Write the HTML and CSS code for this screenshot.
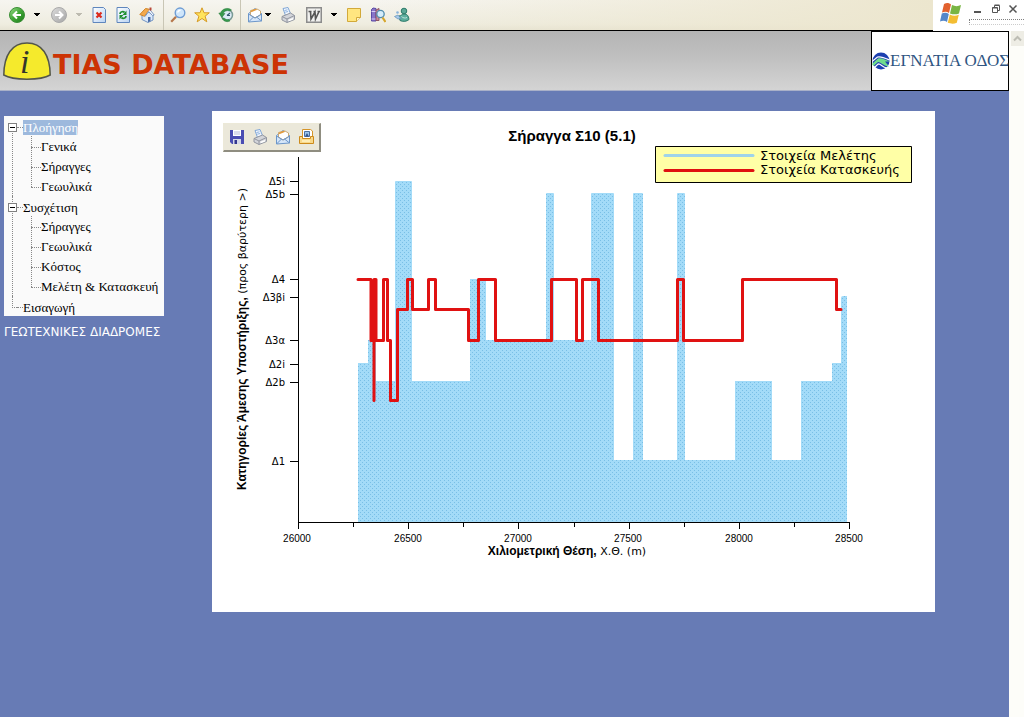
FILE: index.html
```html
<!DOCTYPE html>
<html lang="el">
<head>
<meta charset="utf-8">
<title>TIAS DATABASE</title>
<meta name="viewport" content="width=device-width, initial-scale=1">
<link rel="stylesheet" href="styles.css">
</head>
<body>
<svg class="defs" aria-hidden="true">
  <defs>
    <linearGradient id="green" x1="0" y1="0" x2="1" y2="1"><stop offset="0" stop-color="#9bdc8a"/><stop offset=".5" stop-color="#3fa535"/><stop offset="1" stop-color="#1c7a1a"/></linearGradient>
    <linearGradient id="grey" x1="0" y1="0" x2="1" y2="1"><stop offset="0" stop-color="#dcdcdc"/><stop offset="1" stop-color="#a5a5a5"/></linearGradient>
    <linearGradient id="sheet" x1="0" y1="0" x2="1" y2="1"><stop offset="0" stop-color="#ffffff"/><stop offset="1" stop-color="#b9d3f3"/></linearGradient>
    <symbol id="i-mail" viewBox="0 0 16 16">
      <path d="M1.500 6.500 8 1.500l6.500 5v7.500l-13 1z" fill="#d5e6fa" stroke="#6c96c9"/>
      <path d="M3.500 3.500 10 2l3.500 2v4L8 11 3.500 8z" fill="#fff" stroke="#c9a877"/>
      <path d="M1.500 7 8 11l6.500-4M1.500 15 6.500 10M14.500 14 9.500 10" fill="none" stroke="#6c96c9"/>
      <path d="M4 4.500 9.500 2.200" stroke="#e29a3c" stroke-width="1.500"/>
    </symbol>
    <symbol id="i-print" viewBox="0 0 16 16">
      <path d="M3 1.500 8 .5l2.500 6-5 2z" fill="#f4f9ff" stroke="#7fa6d6"/>
      <path d="M4.500 3.500l3-.7M5.200 5.200l3-.7" stroke="#8bb0e0"/>
      <path d="M2 9.500 10.500 6l4 2.500v4L7 15.500 2 13z" fill="#d3d5da" stroke="#9296a0"/>
      <path d="M2 9.500 7 12l7.500-3.500M7 12v3.500" fill="none" stroke="#9296a0"/>
      <path d="M8.500 13.500 13 11.800" stroke="#fff" stroke-width="1.500"/>
    </symbol>
    <symbol id="i-caret" viewBox="0 0 8 16"><path d="M1 6h6v1H6v1H5v1H3V8H2V7H1z" fill="currentColor"/></symbol>
  </defs>
</svg>

<div class="chrome">
  <div class="toolbar" role="toolbar" aria-label="Browser">
    <div class="group">
      <button class="tool" aria-label="Back"><svg viewBox="0 0 16 16"><circle cx="8" cy="8" r="7.500" fill="url(#green)" stroke="#3b8f36"/><path d="M12 8H5M8 4.500 4.500 8 8 11.500" fill="none" stroke="#fff" stroke-width="2"/></svg></button>
      <button class="tool caret" aria-label="Back list"><svg viewBox="0 0 8 16"><use href="#i-caret"/></svg></button>
    </div>
    <div class="group split">
      <button class="tool" aria-label="Forward"><svg viewBox="0 0 16 16"><circle cx="8" cy="8" r="7.500" fill="url(#grey)" stroke="#a9a9a9"/><path d="M4 8h7M8 4.500 11.500 8 8 11.500" fill="none" stroke="#fff" stroke-width="2"/></svg></button>
      <button class="tool caret dim" aria-label="Forward list"><svg viewBox="0 0 8 16"><use href="#i-caret"/></svg></button>
    </div>
    <div class="group inset">
      <button class="tool" aria-label="Stop"><svg viewBox="0 0 16 16"><path d="M2 .5h10.500l2 2v13H2z" fill="url(#sheet)" stroke="#5f86bd"/><path d="M5.500 5.500l5 5M10.500 5.500l-5 5" stroke="#dc2a1c" stroke-width="2.200"/></svg></button>
      <button class="tool" aria-label="Refresh"><svg viewBox="0 0 16 16"><path d="M2 .5h10.500l2 2v13H2z" fill="url(#sheet)" stroke="#5f86bd"/><path d="M5 7c0-2.500 3.500-3 4.500-1.500M11 9c0 2.500-3.500 3-4.500 1.500" fill="none" stroke="#1f9030" stroke-width="1.800"/><path d="M11.500 3.500V8H7.500zM4.500 12.500V8h4z" fill="#1f9030"/></svg></button>
      <button class="tool" aria-label="Home"><svg viewBox="0 0 16 16"><path d="M3 7.500 6 4l8 3v6l-5 2.500-6-3z" fill="#dce9fa" stroke="#7394c2"/><path d="M.8 7.500 6.500 1.500l4 .8-5 7z" fill="#f2a94e" stroke="#d18428"/><path d="M10.500 2.300 15.200 8l-1.500.7-4-4.200L6 9.500" fill="#fff" stroke="#7394c2"/><path d="M9 10h2.500v4.200L9 15.300z" fill="#4a6ea8"/><path d="M10.500.5h2v3h-2z" fill="#b8493a"/></svg></button>
    </div>
    <div class="group ruled">
      <button class="tool" aria-label="Search"><svg viewBox="0 0 16 16"><path d="M1.200 14.800 6 9.700" stroke="#b5764a" stroke-width="2.200"/><circle cx="10" cy="5.800" r="4.800" fill="#cfe6fb" stroke="#6e9cd4" stroke-width="1.400"/><path d="M7.500 5.500c.5-1.500 1.500-2.300 3-2.300" fill="none" stroke="#fff" stroke-width="1.400"/></svg></button>
      <button class="tool" aria-label="Favorites"><svg viewBox="0 0 16 16"><path d="M8 .8l2 5h5.300l-4.200 3.400 1.700 5.600L8 11.500l-4.800 3.300 1.700-5.600L.7 5.800H6z" fill="#ffe45c" stroke="#d69a24"/></svg></button>
      <button class="tool" aria-label="History"><svg viewBox="0 0 16 16"><circle cx="9" cy="8" r="5.500" fill="#dcebf6" stroke="#7a9a96" stroke-width="1.500"/><path d="M13.500 3A7 7 0 0 0 2.500 6L.8 6 3.800 10.500 7 6.500H5A5 5 0 0 1 11.500 4zM4 11.500a6.500 6.500 0 0 0 8 2.500l-1-1.500a5 5 0 0 1-5-1.500z" fill="#37994c" stroke="#287a3c" stroke-width=".5"/><path d="M9 8.500l3-2.500M9 8.500h3" stroke="#34586e" stroke-width="1.200"/></svg></button>
    </div>
    <div class="group ruled">
      <span class="menu">
        <button class="tool" aria-label="Mail"><svg viewBox="0 0 16 16"><use href="#i-mail"/></svg></button>
        <button class="tool caret" aria-label="Mail options"><svg viewBox="0 0 8 16"><use href="#i-caret"/></svg></button>
      </span>
      <button class="tool" aria-label="Print"><svg viewBox="0 0 16 16"><use href="#i-print"/></svg></button>
    </div>
    <div class="group split">
      <button class="tool" aria-label="Edit with Word"><svg viewBox="0 0 16 16"><path d="M.75.75h14.500v14.500H.75z" fill="#f0f0ee" stroke="#8c8c8c" stroke-width="1.500"/><path d="M2.500 4.500h3M7.500 4.500h2M11.500 4.500h2.500M4.500 4.500 5 12l4-7 .5 7 3.500-7.500" fill="none" stroke="#555" stroke-width="1.600"/></svg></button>
      <button class="tool caret" aria-label="Edit options"><svg viewBox="0 0 8 16"><use href="#i-caret"/></svg></button>
    </div>
    <div class="group inset">
      <button class="tool" aria-label="Notes"><svg viewBox="0 0 16 16"><path d="M1.500 1.500h13v9l-4 4h-9z" fill="#ffe680" stroke="#d2a93a"/><path d="M10.500 14.500v-4h4" fill="#fff6c4" stroke="#d2a93a"/></svg></button>
      <button class="tool" aria-label="Research"><svg viewBox="0 0 16 16"><path d="M1.500 2.500 3 1l3 .5v12.500H1.500z" fill="#8875c9" stroke="#5b4aa5"/><path d="M6 3l3-1.500v12H6z" fill="#c88a9a" stroke="#8c5566"/><path d="M1.500 4.500h4M1.500 12h4" stroke="#d9cff5"/><circle cx="10.500" cy="7" r="3.700" fill="#d4ecfa" stroke="#528dac" stroke-width="1.300"/><path d="M12.500 10.500l3 4.500" stroke="#d6a62b" stroke-width="2.200"/></svg></button>
      <button class="tool" aria-label="Messenger"><svg viewBox="0 0 16 16"><circle cx="10" cy="4" r="2.800" fill="#5aa896" stroke="#2d7a69"/><path d="M5 9c2 0 3-2 5-2 3 0 4.500 1.500 5 5.500-2 2-6 2.500-9 1z" fill="#5cae9d" stroke="#2d7a69"/><path d="M7.500 9.500c1.500 1.500 3.500 2 5.500 1" fill="none" stroke="#bfe6dc"/><circle cx="3.500" cy="5.500" r="1.300" fill="#89b3da"/><path d="M.5 9.500 4 8l3 3.500-3 .5z" fill="#a6c9e9" stroke="#5e8eb8" stroke-width=".7"/></svg></button>
    </div>
  </div>
  <div class="window">
    <svg class="flag" viewBox="0 0 24 22" role="img" aria-label="Windows"><path d="M5 2c3-1.500 5-1 7 .5L10 11C8 9.500 5.500 9.500 3 10.500z" fill="#e2612e"/><path d="M13 3c3 1.500 6 1.500 9 0l-2 8.500c-3 1.300-6 1-9 0z" fill="#79b543"/><path d="M2.800 11.500c2.500-1 5-1 7 .5L8 20c-2-1.500-4.500-1.500-7-.5z" fill="#5487c9"/><path d="M10.800 12.500c3 1.500 6 1.500 9 .3l-2 8c-3 1.200-6 1-9 0z" fill="#f3bd32"/></svg>
    <div class="window-side">
      <div class="window-buttons">
        <button class="win" aria-label="Minimize"><svg viewBox="0 0 10 10"><path d="M1 8h7" stroke="#555" stroke-width="2"/></svg></button>
        <button class="win" aria-label="Restore"><svg viewBox="0 0 10 10"><path d="M3.500 3V1.500h5v5H7M1.500 3.500h5v5h-5zM3.500 1h5M1.500 4h5" fill="none" stroke="#555"/></svg></button>
        <button class="win" aria-label="Close"><svg viewBox="0 0 10 10"><path d="M1.500 1.500l7 7M8.500 1.500l-7 7" stroke="#555" stroke-width="1.500"/></svg></button>
      </div>
      <div class="strip"></div>
    </div>
  </div>
</div>

<div class="viewport">
  <div class="page">
    <header class="banner">
      <svg class="info" viewBox="0 0 48 38" aria-hidden="true"><path d="M.8 33C1 13 9 1 24 1s23 12 23.200 32C38 38.500 10 38.500.8 33z" fill="#f5ea2c" stroke="#53564a" stroke-width="1.500"/><text x="17" y="31" class="info-letter">i</text></svg>
      <h1>TIAS DATABASE</h1>
      <div class="brand">
        <svg class="globe" viewBox="0 0 18 18" aria-hidden="true"><circle cx="9" cy="9" r="8.500" fill="#1c3fb0"/><path d="M0 12 6 6.500C9 5.500 12 7 18 9.500L13 9.500 17 14.500C12 14.500 9 10 6 10L1.500 14z" fill="#6fdc8c"/><path d="M0 9.500 5.500 5C9 4 12 5.500 17.500 8M2.500 15.500 6 12c3-.5 4 3.500 9 4" fill="none" stroke="#fff" stroke-width="1.200"/></svg>
        <span>ΕΓΝΑΤΙΑ ΟΔΟΣ</span>
      </div>
    </header>

    <div class="content">
      <nav class="side">
        <ul class="tree">
          <li class="branch"><div class="row"><button class="toggle" aria-label="Σύμπτυξη"></button><a class="selected" href="#">Πλοήγηση</a></div>
            <ul>
              <li><a href="#">Γενικά</a></li>
              <li><a href="#">Σήραγγες</a></li>
              <li><a href="#">Γεωυλικά</a></li>
            </ul>
          </li>
          <li class="branch"><div class="row"><button class="toggle" aria-label="Σύμπτυξη"></button><a href="#">Συσχέτιση</a></div>
            <ul>
              <li><a href="#">Σήραγγες</a></li>
              <li><a href="#">Γεωυλικά</a></li>
              <li><a href="#">Κόστος</a></li>
              <li><a href="#">Μελέτη &amp; Κατασκευή</a></li>
            </ul>
          </li>
          <li class="branch last"><div class="row"><span class="elbow"></span><a href="#">Εισαγωγή</a></div></li>
        </ul>
        <a class="routes" href="#">ΓΕΩΤΕΧΝΙΚΕΣ ΔΙΑΔΡΟΜΕΣ</a>
      </nav>

      <main class="panel">
        <div class="image-tools" role="toolbar" aria-label="Εικόνα">
          <button class="tool" aria-label="Save"><svg viewBox="0 0 16 16"><path d="M1 1h14v14H3l-2-2z" fill="#4a4db3"/><path d="M4 1h8v6H4z" fill="#fff"/><path d="M5 3h6M5 5h6" stroke="#b5b9dc"/><path d="M4 10h8v5H4z" fill="#d5d8e8"/><path d="M5.500 11h2.500v4H5.500z" fill="#33368f"/></svg></button>
          <button class="tool" aria-label="Print"><svg viewBox="0 0 16 16"><use href="#i-print"/></svg></button>
          <button class="tool" aria-label="Mail"><svg viewBox="0 0 16 16"><use href="#i-mail"/></svg></button>
          <button class="tool" aria-label="My Pictures"><svg viewBox="0 0 16 16"><path d="M4.500 10V.5h8L14.500 2v8" fill="#fff" stroke="#d6952a"/><path d="M6.500 2.500h5v5h-5z" fill="#9cc7ef" stroke="#4a6ea0"/><path d="M9 4l2 3.500H7z" fill="#35558c"/><path d="M1.500 7.500h3v2h8v-2h3v7h-14z" fill="#f9d98a" stroke="#cc8a1c"/><path d="M4 12h8" stroke="#fff3c4" stroke-width="1.500"/></svg></button>
        </div>
        <svg class="chart" viewBox="212 111 723 501" role="img" aria-label="Σήραγγα Σ10 (5.1)">
          <defs>
            <pattern id="weave" width="4" height="4" patternUnits="userSpaceOnUse">
              <path d="M0 0h4v4H0z" fill="#a3dbf8"/><path d="M0 0h1v1H0zM2 2h1v1H2z" fill="#79bfe6"/>
            </pattern>
          </defs>
          <path class="area" d="M358 522V363H368V340H376V381H395V182q0-1 1-1H411q1 0 1 1V381H470V279H486V340H546V194q0-1 1-1H553q1 0 1 1V340H591V194q0-1 1-1H613q1 0 1 1V460H633V194q0-1 1-1H642q1 0 1 1V460H677V194q0-1 1-1H684q1 0 1 1V460H735V381H772V460H801V381H832V363H841V298q0-2 2-2H847V522z"/>
          <path class="line" d="M358 279.500H371V340.500H374V400.500V279.500H376V340.500H383.500V279.500H387.500V340.500H390.500V400.500H397.500V309.500H407.500V279.500H412.500V309.500H428.500V279.500H435.500V309.500H468.500V340.500H478.500V279.500H495.500V340.500H551.500V279.500H576.500V340.500H582.500V279.500H598.500V340.500H677.500V279.500H683.500V340.500H742.500V279.500H836.500V309.500H841"/>
          <path class="axis" d="M298.500 157V529M298 522.500H850M290 181.500h8M290 194.500h8M290 279.500h8M290 297.500h8M290 340.500h8M290 364.500h8M290 382.500h8M290 461.500h8M353.500 522v5M408.500 522v7M463.500 522v5M518.500 522v7M574.500 522v5M629.500 522v7M684.500 522v5M739.500 522v7M794.500 522v5M849.500 522v7"/>
          <g class="y-labels">
            <text x="285" y="185">Δ5i</text><text x="285" y="198">Δ5b</text><text x="285" y="283">Δ4</text><text x="285" y="301">Δ3βi</text><text x="285" y="344">Δ3α</text><text x="285" y="368">Δ2i</text><text x="285" y="386">Δ2b</text><text x="285" y="465">Δ1</text>
          </g>
          <g class="x-labels">
            <text x="297" y="542">26000</text><text x="408" y="542">26500</text><text x="518" y="542">27000</text><text x="628" y="542">27500</text><text x="739" y="542">28000</text><text x="849" y="542">28500</text>
          </g>
          <text class="title" x="572" y="141">Σήραγγα Σ10 (5.1)</text>
          <text class="axis-title" x="567" y="555"><tspan class="strong">Χιλιομετρική Θέση,</tspan> Χ.Θ. (m)</text>
          <text class="axis-title" transform="translate(246 339) rotate(-90)"><tspan class="strong">Κατηγορίες Άμεσης Υποστήριξης,</tspan> (προς βαρύτερη &gt;)</text>
          <path d="M655.500 146.500h256v36h-256z" fill="#ffffa6" stroke="#000"/>
          <path d="M665 155.500h88" stroke="#9fd3ea" stroke-width="3" stroke-linecap="round"/>
          <path d="M665 170.500h88" stroke="#e01010" stroke-width="3" stroke-linecap="round"/>
          <g class="legend"><text x="760" y="160">Στοιχεία Μελέτης</text><text x="760" y="174">Στοιχεία Κατασκευής</text></g>
        </svg>
      </main>
    </div>
  </div>
  <div class="scrollbar">
    <button class="scroll-up" aria-label="Scroll up"><svg viewBox="0 0 13 15"><path d="M3 9.500 6.500 6 10 9.500" fill="none" stroke="#bdbdb4" stroke-width="2"/></svg></button>
  </div>
</div>
</body>
</html>
```

FILE: styles.css
```css
* { box-sizing: border-box; }

body {
  margin: 0;
  min-height: 100vh;
  display: flex;
  flex-direction: column;
  background: #fff;
  font-family: "Liberation Serif", "Times New Roman", serif;
  font-size: 13px;
  color: #000;
}

button {
  padding: 0;
  border: 0;
  background: none;
  color: inherit;
}

a { color: inherit; text-decoration: none; }
ul { margin: 0; padding: 0; list-style: none; }
svg { display: block; }
.defs { position: absolute; width: 0; height: 0; }

/* Browser bar */
.chrome { display: flex; height: 31px; }

.toolbar {
  flex: 1;
  display: flex;
  align-items: center;
  gap: 6px;
  padding-left: 9px;
  border-bottom: 1px solid #000;
  background: linear-gradient(to right, rgba(236, 230, 206, 0) 40%, #ece6ce), linear-gradient(#f6f5f0, #efede0 80%, #e6e3d3);
}

.group { display: flex; align-items: center; gap: 8px; height: 100%; }
.split { margin-left: 4px; }
.inset { padding: 0 2px; }
.ruled { padding-left: 6px; border-left: 1px solid #c9c6b5; }
.menu { display: flex; gap: 1px; }
.tool { width: 16px; height: 16px; }
.tool svg { width: 100%; height: 100%; }
.caret { width: 8px; }
.dim { color: #bdbbb0; }

.window {
  display: flex;
  gap: 6px;
  width: 91px;
  padding-left: 6px;
}
.flag { width: 24px; height: 22px; margin-top: 2px; }
.window-side { flex: 1; display: flex; flex-direction: column; gap: 5px; padding-top: 4px; }
.window-buttons { display: flex; justify-content: space-between; padding: 0 6px 0 4px; }
.win { width: 10px; height: 10px; }
.strip { height: 6px; border: 1px dotted #808080; border-right: 0; border-bottom-color: #ccc; }

/* Page */
.viewport { flex: 1; display: flex; }
.page { flex: 1; min-width: 0; background: #677bb5; }

.banner {
  display: flex;
  height: 60px;
  border-bottom: 1px solid #a9b0c8;
  background: linear-gradient(#b4b4b4, #c0c0c0 45%, #d4d4d4);
}
.info { width: 48px; height: 38px; margin: 11px 2px 0 3px; }
.info-letter { font: italic 34px "Liberation Serif", serif; fill: #33362c; }

h1 {
  flex: 1;
  margin: 0;
  font: bold 27px/67px "DejaVu Sans", sans-serif;
  color: #cc3304;
}

.brand {
  display: flex;
  align-items: center;
  width: 138px;
  height: 60px;
  border: 1px solid #000;
  background: #fff;
  color: #2f5582;
  font-size: 17px;
  white-space: nowrap;
}
.globe { flex: none; width: 18px; height: 18px; }

.content {
  display: flex;
  align-items: flex-start;
  gap: 48px;
  padding: 20px 74px 20px 4px;
}

.side { flex: none; width: 160px; padding-top: 5px; }
.tree { background: #fafafa; font-size: 13px; white-space: nowrap; }

.branch { position: relative; padding-left: 4px; }
.branch::before {
  content: "";
  position: absolute;
  top: 0;
  bottom: 0;
  left: 8px;
  border-left: 1px dotted #888;
}
.branch:first-child::before { top: 10px; }
.last::before { bottom: 10px; }

.row { position: relative; display: flex; align-items: center; height: 20px; padding-top: 2px; }
.toggle {
  width: 9px;
  height: 9px;
  border: 1px solid #808080;
  background: linear-gradient(#000, #000) center / 5px 1px no-repeat #fff;
}
.row::before { content: ""; order: 1; width: 6px; border-top: 1px dotted #888; }
.row a { order: 2; line-height: 15px; }
.elbow { width: 5px; margin-left: 4px; border-top: 1px dotted #888; }
.selected { background: #9db9dd; color: #fff; }

.branch ul { position: relative; padding-left: 23px; }
.branch ul::before {
  content: "";
  position: absolute;
  top: 0;
  bottom: 9px;
  left: 23px;
  border-left: 1px dotted #888;
}
.branch ul li { display: flex; align-items: center; height: 20px; padding-top: 2px; }
.branch ul li::before { content: ""; flex: none; width: 10px; border-top: 1px dotted #888; }

.routes {
  display: block;
  margin-top: 8px;
  font: 12px/16px "DejaVu Sans", sans-serif;
  color: #fff;
  white-space: nowrap;
}

/* Chart */
.panel { position: relative; flex: 1; min-width: 0; background: #fff; }

.image-tools {
  position: absolute;
  top: 12px;
  left: 11px;
  display: flex;
  gap: 7px;
  padding: 5px;
  border: 1px solid #ece9d8;
  border-right: 2px solid #8f8d80;
  border-bottom: 2px solid #8f8d80;
  background: #ebe8da;
}

.chart { width: 100%; height: auto; font-family: "Liberation Sans", Arial, sans-serif; }
.area { fill: url(#weave); }
.line { fill: none; stroke: #e01212; stroke-width: 3; stroke-linejoin: round; stroke-linecap: round; }
.axis { fill: none; stroke: #000; }
.y-labels { font: 10px "DejaVu Sans", sans-serif; text-anchor: end; }
.x-labels { font-size: 10px; text-anchor: middle; }
.title { font-size: 15px; font-weight: bold; text-anchor: middle; }
.axis-title { font: 11px "DejaVu Sans", sans-serif; text-anchor: middle; }
.strong { font: bold 12px "Liberation Sans", Arial, sans-serif; }
.legend { font: 13px "DejaVu Sans", sans-serif; }

.scrollbar { width: 15px; padding-left: 2px; background: #fdfdf9; }
.scroll-up { width: 13px; height: 15px; background: #eeede5; }
```
